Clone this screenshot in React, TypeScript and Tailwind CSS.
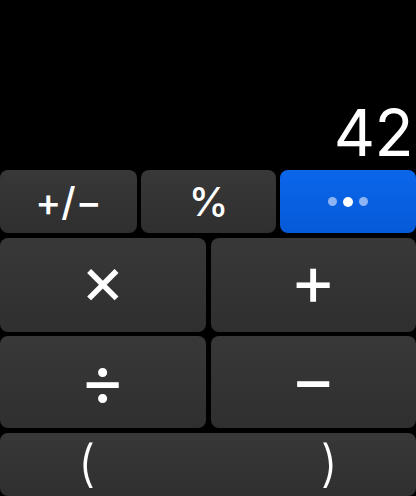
import React from "react";

const btn =
  "flex items-center rounded-[8px] bg-gradient-to-b from-[#383838] to-[#2f2f2f] text-white";

export default function App() {
  return (
    <div
      className="flex h-[496px] w-[416px] flex-col overflow-hidden bg-black text-white"
      style={{ fontFamily: "Inter, 'Liberation Sans', sans-serif" }}
    >
      <div className="flex h-[170px] items-end justify-end pb-[5px] pr-[3px]">
        <span className="text-[64px] leading-none font-normal tracking-[-0.5px]">42</span>
      </div>
      <div className="flex flex-1 flex-col gap-[4.5px]">
        <div className="grid h-[63px] grid-cols-[137px_135px_1fr] gap-[4px]">
          <div className={`${btn} justify-center`}>
            <span className="text-[39px] leading-none font-medium">+/−</span>
          </div>
          <div className={`${btn} justify-center`}>
            <span className="text-[40px] leading-none font-medium">%</span>
          </div>
          <div className="flex items-center justify-center gap-[6px] rounded-[8px] bg-gradient-to-b from-[#0b66ea] to-[#065ad8]">
            <span className="h-[9px] w-[9px] rounded-full bg-[#8db4f2]" />
            <span className="h-[10px] w-[10px] rounded-full bg-white" />
            <span className="h-[9px] w-[9px] rounded-full bg-[#8db4f2]" />
          </div>
        </div>
        <div className="grid h-[94px] grid-cols-2 gap-[5px]">
          <div className={`${btn} justify-center`}>
            <span className="mb-[12px] text-[68px] leading-none font-normal">×</span>
          </div>
          <div className={`${btn} justify-center`}>
            <span className="mb-[10px] text-[70px] leading-none font-normal">+</span>
          </div>
        </div>
        <div className="grid h-[92px] grid-cols-2 gap-[5px]">
          <div className={`${btn} justify-center`}>
            <span className="mb-[4px] text-[70px] leading-none font-normal">÷</span>
          </div>
          <div className={`${btn} justify-center`}>
            <span className="mb-[6px] text-[70px] leading-none font-normal">−</span>
          </div>
        </div>
        <div className={`${btn} flex-1 justify-between px-[78px] pb-[2px]`}>
          <span className="text-[50px] leading-none font-light">(</span>
          <span className="text-[50px] leading-none font-light">)</span>
        </div>
      </div>
    </div>
  );
}
